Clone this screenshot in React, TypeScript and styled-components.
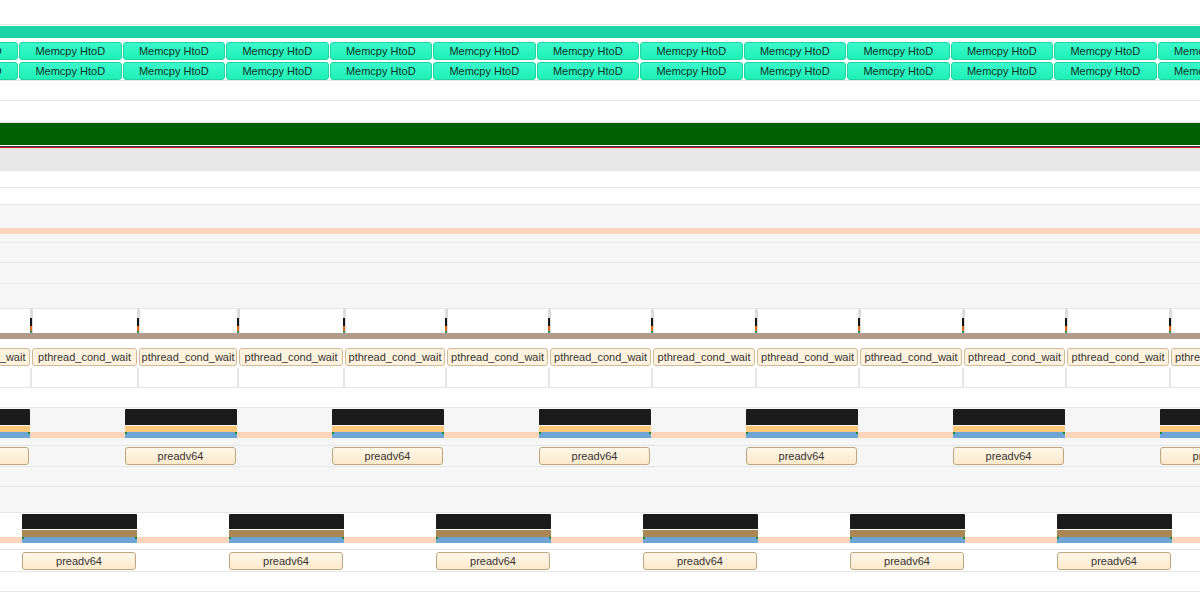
import styled, { createGlobalStyle } from "styled-components";

const GlobalStyle = createGlobalStyle`
  html, body {
    margin: 0;
    padding: 0;
    background: #fff;
  }
  body {
    font-family: "Liberation Sans", Arial, sans-serif;
  }
`;

// tick positions of the CPU sampling row (left edge, px)
const TICKS = [30, 137, 237, 343, 445, 548, 651, 755, 858, 962, 1065, 1169];
const MEMCPY_PERIOD = 103.5;
const BURST_PERIOD = 207;

const Timeline = styled.div`
  display: flex;
  flex-direction: column;
  width: 1200px;
  height: 608px;
  overflow: hidden;
  background: #fff;
`;

const Lane = styled.div<{ $h: number; $bg?: string; $line?: boolean }>`
  position: relative;
  flex: none;
  height: ${(p) => p.$h}px;
  background: ${(p) => p.$bg ?? "#fff"};
  border-bottom: ${(p) => (p.$line ? "1px solid #e6e6e6" : "none")};
  overflow: hidden;
`;

const Rule = styled.div<{ $c: string }>`
  flex: none;
  height: 1px;
  background: ${(p) => p.$c};
`;

const Band = styled.div<{ $top: number; $h: number; $c: string }>`
  position: absolute;
  left: 0;
  right: 0;
  top: ${(p) => p.$top}px;
  height: ${(p) => p.$h}px;
  background: ${(p) => p.$c};
`;

type SliceKind = "memcpy" | "pthread" | "preadv";

const sliceSkin: Record<SliceKind, string> = {
  memcpy: `
    background: linear-gradient(#3cf9cb, #1ff0b6);
    border: 1px solid #1cd5a2;
    color: #0b3328;
  `,
  pthread: `
    background: #fff3df;
    border: 1px solid #cfbb96;
    color: #333;
  `,
  preadv: `
    background: linear-gradient(#fff7e8, #fde9cb);
    border: 1px solid #bda681;
    color: #333;
  `,
};

const Slice = styled.div<{ $kind: SliceKind; $top: number }>`
  position: absolute;
  top: ${(p) => p.$top}px;
  height: 18px;
  box-sizing: border-box;
  border-radius: 3px;
  display: flex;
  align-items: center;
  justify-content: center;
  font-size: 11px;
  white-space: nowrap;
  overflow: hidden;
  ${(p) => sliceSkin[p.$kind]}
`;

const Burst = styled.div`
  position: absolute;
  top: 1px;
  display: flex;
  flex-direction: column;
`;

const Cap = styled.div<{ $h: number }>`
  height: ${(p) => p.$h}px;
  background: #1b1b1b;
  border-radius: 1px 1px 0 0;
  margin-bottom: 1px;
`;

const Stripe = styled.div<{ $h: number; $c: string }>`
  height: ${(p) => p.$h}px;
  background: ${(p) => p.$c};
`;

const Base = styled.div`
  position: relative;
  height: 6px;
  background: #6da6d5;
  &::before,
  &::after {
    content: "";
    position: absolute;
    top: 0;
    width: 2px;
    height: 2px;
    background: #178a3c;
  }
  &::before {
    left: 0;
  }
  &::after {
    right: 0;
  }
`;

const Tick = styled.div`
  position: absolute;
  top: 0;
  width: 3px;
  height: 24px;
  background: #dcdcdc;
  display: flex;
  flex-direction: column;
  justify-content: flex-end;
`;

const Mark = styled.div<{ $h: number; $c: string }>`
  width: 2px;
  height: ${(p) => p.$h}px;
  background: ${(p) => p.$c};
`;

const Trace = styled.div`
  position: absolute;
  top: 1px;
  width: 2px;
  height: 19px;
  background: #e6e6e6;
`;

function MemcpyLane({ line }: { line?: boolean }) {
  const boxes = Array.from({ length: 13 }, (_, i) => 19 + MEMCPY_PERIOD * (i - 1));
  return (
    <Lane $h={line ? 19 : 20} $line={line}>
      {boxes.map((x) => (
        <Slice key={x} $kind="memcpy" $top={1} style={{ left: x, width: MEMCPY_PERIOD - 1 }}>
          Memcpy HtoD
        </Slice>
      ))}
    </Lane>
  );
}

function SamplingLane() {
  return (
    <Lane $h={38}>
      {TICKS.map((x) => (
        <Tick key={x} style={{ left: x }}>
          <Mark $h={8} $c="#161616" />
          <Mark $h={5} $c="#d9691c" />
          <Mark $h={2} $c="#2a9a6a" />
        </Tick>
      ))}
      <Band $top={24} $h={6} $c="#b29b8c" />
    </Lane>
  );
}

function WaitLane() {
  const edges = [TICKS[0] - 104, ...TICKS, 1272];
  return (
    <Lane $h={20}>
      {edges.slice(0, -1).map((x, i) => (
        <Slice
          key={x}
          $kind="pthread"
          $top={1}
          style={{ left: x + 2, width: edges[i + 1] - x - 2 }}
        >
          pthread_cond_wait
        </Slice>
      ))}
    </Lane>
  );
}

function TraceLane() {
  return (
    <Lane $h={20} $line>
      {TICKS.map((x) => (
        <Trace key={x} style={{ left: x }} />
      ))}
    </Lane>
  );
}

function BurstLane({
  start,
  width,
  bg,
  capH,
  stripe,
  stripeH,
}: {
  start: number;
  width: number;
  bg: string;
  capH: number;
  stripe: string;
  stripeH: number;
}) {
  const xs = Array.from({ length: 7 }, (_, i) => start + BURST_PERIOD * i);
  return (
    <Lane $h={bg === "#fff" ? 36 : 37} $bg={bg} $line>
      <Band $top={24} $h={6} $c="#fcd5bb" />
      {xs.map((x) => (
        <Burst key={x} style={{ left: x, width }}>
          <Cap $h={capH} />
          <Stripe $h={stripeH} $c={stripe} />
          <Base />
        </Burst>
      ))}
    </Lane>
  );
}

function ReadLane({
  start,
  width,
  count,
  bg,
  top,
  h,
}: {
  start: number;
  width: number;
  count: number;
  bg: string;
  top: number;
  h: number;
}) {
  const xs = Array.from({ length: count }, (_, i) => start + BURST_PERIOD * i);
  return (
    <Lane $h={h} $bg={bg} $line>
      {xs.map((x) => (
        <Slice key={x} $kind="preadv" $top={top} style={{ left: x, width: width - 1 }}>
          preadv64
        </Slice>
      ))}
    </Lane>
  );
}

export default function App() {
  return (
    <>
      <GlobalStyle />
      <Timeline>
        <Lane $h={24} $line />
        <Lane $h={16}>
          <Band $top={1} $h={12} $c="#1ed3a6" />
        </Lane>
        <MemcpyLane />
        <MemcpyLane line />
        <Lane $h={19} $line />
        <Lane $h={21} $line />
        <Lane $h={22} $bg="#006000" />
        <Rule $c="#ffffff" />
        <Rule $c="#3a3a3a" />
        <Rule $c="#c8182a" />
        <Lane $h={22} $bg="#e8e8e8" $line />
        <Lane $h={16} $line />
        <Lane $h={16} $line />
        <Lane $h={37} $bg="#f6f6f6" $line>
          <Band $top={23} $h={6} $c="#fcd5bb" />
        </Lane>
        <Lane $h={19} $bg="#f6f6f6" $line />
        <Lane $h={20} $bg="#f6f6f6" $line />
        <Lane $h={24} $bg="#f6f6f6" $line />
        <SamplingLane />
        <WaitLane />
        <TraceLane />
        <Lane $h={19} $line />
        <BurstLane start={125 - BURST_PERIOD} width={112} bg="#f6f6f6" capH={16} stripe="#ffc87a" stripeH={6} />
        <ReadLane start={125 - BURST_PERIOD} width={112} count={7} bg="#f6f6f6" top={1} h={20} />
        <Lane $h={19} $bg="#f6f6f6" $line />
        <Lane $h={25} $bg="#f6f6f6" $line />
        <BurstLane start={22} width={115} bg="#fff" capH={15} stripe="#a98752" stripeH={7} />
        <ReadLane start={22} width={115} count={6} bg="#fff" top={2} h={21} />
        <Lane $h={19} $line />
        <Lane $h={16} />
      </Timeline>
    </>
  );
}
